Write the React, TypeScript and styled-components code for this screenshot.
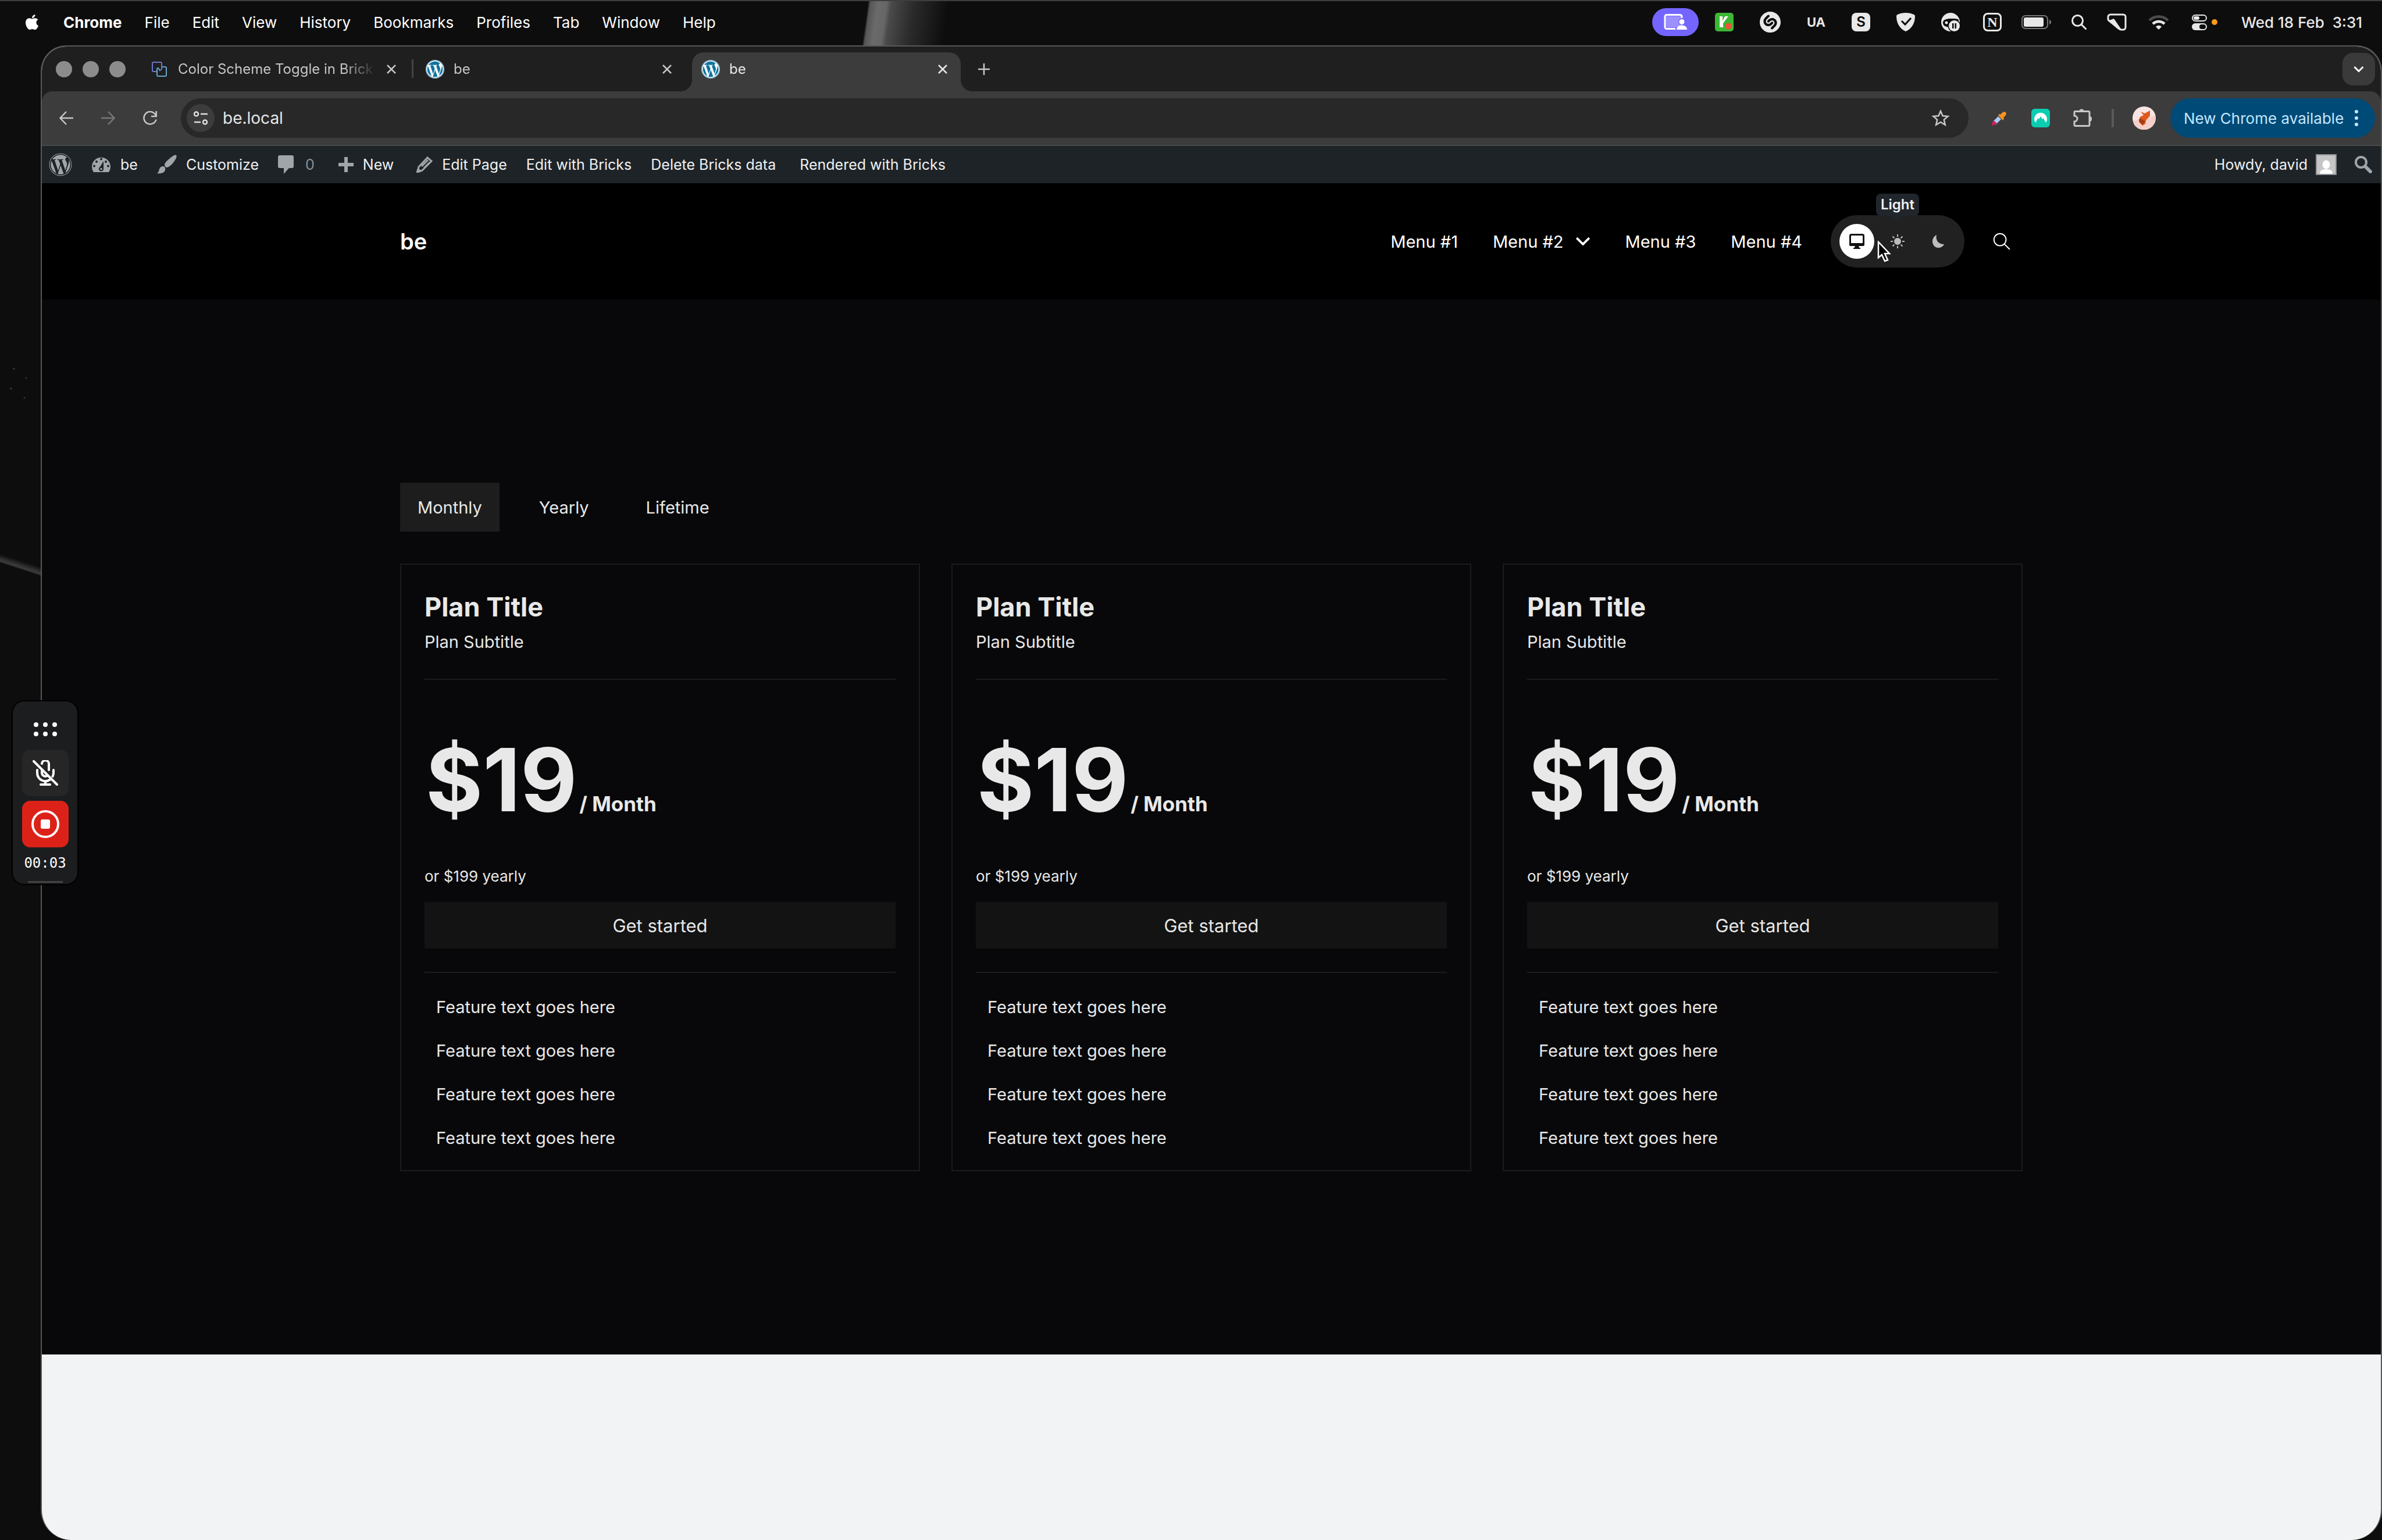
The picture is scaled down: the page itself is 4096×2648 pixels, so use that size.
import React from "react";
import styled, { createGlobalStyle, css } from "styled-components";
import { FaApple, FaWordpress } from "react-icons/fa";
import { SiShazam } from "react-icons/si";

const ui = `Inter, "Liberation Sans", sans-serif`;

const GlobalStyle = createGlobalStyle`
  * { box-sizing: border-box; }
  html, body { margin: 0; background: #0c0c0c; }
  body { font-family: ${ui}; color: #fff; }
  button { font: inherit; color: inherit; background: none; border: 0; padding: 0; }
  a { color: inherit; text-decoration: none; }
  h2, p, ul { margin: 0; padding: 0; font-weight: 400; }
  ul { list-style: none; }
  svg { display: block; flex: none; }
`;

/* ---------- desktop ---------- */

const Desktop = styled.div`
  position: relative;
  min-height: 100vh;
  display: flex;
  flex-direction: column;
  background-color: #0d0d0d;
  background-image:
    linear-gradient(98deg, transparent 7%, #555 9%, #6a6a6a 16%, #666 24%, #4a4a4a 28%, #2b2b2b 48%, transparent 80%),
    linear-gradient(198deg, transparent 38%, #303030 46%, #3c3c3c 50%, transparent 53%),
    radial-gradient(circle at 24px 34px, #3c3c3c 1px, transparent 2px),
    radial-gradient(circle at 45px 50px, #333 1px, transparent 2px),
    radial-gradient(circle at 19px 68px, #3c3c3c 1px, transparent 2px),
    radial-gradient(circle at 42px 84px, #333 1px, transparent 2px);
  background-size: 180px 78px, 70px 80px, 70px 120px, 70px 120px, 70px 120px, 70px 120px;
  background-position: 1480px 0, 0 936px, 0 600px, 0 600px, 0 600px, 0 600px;
  background-repeat: no-repeat;
`;

const MenuBar = styled.header`
  height: 78px;
  display: flex;
  align-items: center;
  justify-content: space-between;
  padding: 0 34px 4px 40px;
  border-top: 2px solid #3c3f3f;
  font-size: 26px;
`;

const MenuList = styled.nav`
  display: flex;
  align-items: center;
  gap: 39px;
`;

const MenuItem = styled.button<{ $bold?: boolean }>`
  font-weight: ${(p) => (p.$bold ? 700 : 400)};
`;

const StatusArea = styled.div`
  display: flex;
  align-items: center;
  color: #e8e8e8;
`;

const StatusGroup = styled.div<{ $gap: number; $after: number }>`
  display: flex;
  align-items: center;
  gap: ${(p) => p.$gap}px;
  margin-right: ${(p) => p.$after}px;
`;

const SharePill = styled.button`
  width: 80px;
  height: 48px;
  border-radius: 24px;
  background: #7565ff;
  display: grid;
  place-items: center;
  margin-right: 28px;
`;

const Glyph = styled.span<{ $outline?: boolean }>`
  width: 32px;
  height: 32px;
  border-radius: 8px;
  display: grid;
  place-items: center;
  font-size: 24px;
  line-height: 24px;
  font-weight: 600;
  ${(p) =>
    p.$outline
      ? css`
          border: 3px solid #e8e8e8;
          font-family: "Liberation Serif", serif;
          font-weight: 700;
        `
      : css`
          background: #e8e8e8;
          color: #0c0c0c;
        `}
`;

const InputSource = styled.span`
  font-size: 22px;
  font-weight: 700;
`;

const Clock = styled.time`
  font-size: 26px;
  font-weight: 500;
  white-space: pre;
`;

/* ---------- browser window ---------- */

const Window = styled.main`
  flex: 1;
  margin-left: 70px;
  display: flex;
  flex-direction: column;
  border: 2px solid #585858;
  border-bottom: 0;
  border-radius: 44px 44px 52px 52px;
  overflow: hidden;
  background: #f2f3f5;
`;

const TabStrip = styled.div`
  height: 77px;
  display: flex;
  align-items: center;
  padding: 0 10px 0 24px;
  background: #1f1f1f;
`;

const Lights = styled.div`
  display: flex;
  gap: 18px;
  margin-right: 26px;
`;

const Light = styled.button`
  width: 28px;
  height: 28px;
  border-radius: 50%;
  background: #8c8c8c;
`;

const Tabs = styled.div`
  align-self: flex-end;
  display: flex;
  gap: 12px;
`;

const Tab = styled.div<{ $active?: boolean; $divided?: boolean }>`
  position: relative;
  width: 462px;
  height: 67px;
  padding: 0 19px 10px 16px;
  display: flex;
  align-items: center;
  gap: 16px;
  border-radius: 20px 20px 0 0;
  color: ${(p) => (p.$active ? "#e6e6e6" : "#c4c4c4")};
  background: ${(p) => (p.$active ? "#3c3c3c" : "transparent")};
  ${(p) =>
    p.$active &&
    css`
      &::before,
      &::after {
        content: "";
        position: absolute;
        bottom: 0;
        width: 20px;
        height: 20px;
      }
      &::before {
        right: 100%;
        background: radial-gradient(circle at 0 0, transparent 20px, #3c3c3c 20px);
      }
      &::after {
        left: 100%;
        background: radial-gradient(circle at 100% 0, transparent 20px, #3c3c3c 20px);
      }
    `}
  ${(p) =>
    p.$divided &&
    css`
      &::before {
        content: "";
        position: absolute;
        left: -8px;
        top: 12px;
        width: 3px;
        height: 32px;
        background: #444;
      }
    `}
`;

const TabTitle = styled.span`
  flex: 1;
  min-width: 0;
  white-space: nowrap;
  font-size: 24px;
  line-height: 32px;
  mask-image: linear-gradient(90deg, #000 84%, rgba(0, 0, 0, 0.15) 98%);
`;

const Favicon = styled.span<{ $disc?: boolean }>`
  width: 32px;
  height: 32px;
  border-radius: 50%;
  display: grid;
  place-items: center;
  background: ${(p) => (p.$disc ? "#fff" : "transparent")};
  color: #0f739c;
`;

const IconButton = styled.button<{ $size: number }>`
  width: ${(p) => p.$size}px;
  height: ${(p) => p.$size}px;
  display: grid;
  place-items: center;
  flex: none;
  &:disabled {
    color: #777;
  }
`;

const NewTab = styled(IconButton)`
  margin-left: 20px;
  color: #c8c8c8;
`;

const TabSearch = styled(IconButton)`
  margin-left: auto;
  border-radius: 18px;
  background: #3a3a3a;
`;

const ToolbarBack = styled.div`
  background: #1f1f1f;
`;

const Toolbar = styled.div`
  height: 94px;
  display: flex;
  align-items: center;
  padding: 0 10px 0 17px;
  background: #3c3c3c;
  border-bottom: 2px solid #484b4b;
  border-radius: 18px 18px 0 0;
`;

const NavButtons = styled.div`
  display: flex;
  gap: 22px;
  margin-right: 28px;
  color: #c8c8c8;
`;

const Omnibox = styled.div`
  flex: 1;
  height: 68px;
  display: flex;
  align-items: center;
  padding: 0 32px 0 10px;
  border-radius: 34px;
  background: #282828;
`;

const SiteInfo = styled(IconButton)`
  border-radius: 50%;
  background: #3c3c3c;
`;

const Address = styled.input`
  flex: 1;
  min-width: 0;
  margin-left: 14px;
  padding: 0;
  border: 0;
  outline: 0;
  background: none;
  color: #e6e6e6;
  font: 400 28px/40px ${ui};
`;

const Extensions = styled.div`
  display: flex;
  align-items: center;
  gap: 40px;
  margin: 0 34px 0 36px;
`;

const Rule = styled.span`
  width: 4px;
  height: 32px;
  border-radius: 2px;
  background: #5a5a5a;
  margin-right: 32px;
`;

const UpdateButton = styled.button`
  height: 68px;
  width: 352px;
  margin-left: 25px;
  padding: 0 28px 0 23px;
  display: flex;
  align-items: center;
  justify-content: space-between;
  border-radius: 34px;
  background: #004a77;
  color: #c2e7ff;
  font-size: 26px;
`;

/* ---------- WordPress admin bar ---------- */

const AdminBar = styled.nav`
  height: 64px;
  display: flex;
  align-items: center;
  padding: 0 12px;
  background: #1d2327;
  color: #f0f0f1;
  font-size: 25px;
`;

const AdminList = styled.div`
  display: flex;
  align-items: center;
  gap: 33px;
`;

const AdminLink = styled.a<{ $muted?: boolean }>`
  display: flex;
  align-items: center;
  gap: ${(p) => (p.$muted ? 20 : 16)}px;
  padding-right: ${(p) => (p.$muted ? 8 : 0)}px;
  color: ${(p) => (p.$muted ? "#8c8f94" : "#f0f0f1")};
  svg {
    color: #a0a5aa;
  }
`;

const AdminTexts = styled.div`
  display: flex;
  align-items: center;
  gap: 33px;
  margin-left: 6px;
  > :last-child {
    margin-left: 8px;
  }
`;

const AdminRight = styled.div`
  display: flex;
  align-items: center;
  gap: 14px;
  margin-left: auto;
`;

const AdminAvatar = styled.span`
  width: 36px;
  height: 36px;
  margin-right: 14px;
  border: 2px solid #8c8f94;
  background: #c5c5c5;
`;

/* ---------- site ---------- */

const SiteHeader = styled.header`
  height: 200px;
  background: #000;
`;

const Container = styled.div`
  width: 100%;
  max-width: 2790px;
  margin: 0 auto;
`;

const HeaderRow = styled(Container)`
  height: 100%;
  display: flex;
  align-items: center;
  justify-content: space-between;
`;

const Brand = styled.a`
  font-size: 38px;
  font-weight: 600;
`;

const SiteNav = styled.nav`
  display: flex;
  align-items: center;
  font-size: 29px;
`;

const NavLinks = styled.div`
  display: flex;
  gap: 60px;
  margin-right: 49px;
`;

const NavLink = styled.a`
  display: flex;
  align-items: center;
  gap: 20px;
`;

const SchemeToggle = styled.div`
  position: relative;
  display: flex;
  gap: 10px;
  padding: 15px;
  margin-right: 28px;
  border-radius: 45px;
  background: #212121;
`;

const SchemeButton = styled.button<{ $on?: boolean }>`
  position: relative;
  width: 60px;
  height: 60px;
  border-radius: 50%;
  display: grid;
  place-items: center;
  background: ${(p) => (p.$on ? "#fff" : "transparent")};
  color: ${(p) => (p.$on ? "#111" : "#bdbdbd")};
`;

const Tooltip = styled.span`
  position: absolute;
  left: 50%;
  bottom: calc(100% + 14px);
  transform: translateX(-50%);
  padding: 0 8px;
  border-radius: 8px;
  background: #21262d;
  color: #f0f0f1;
  font-size: 24px;
  line-height: 38px;
  font-weight: 600;
  &::after {
    content: "";
    position: absolute;
    left: 50%;
    top: 100%;
    margin-left: -9px;
    border: 9px solid transparent;
    border-top-color: #21262d;
    border-bottom: 0;
  }
`;

const Pointer = styled.svg`
  position: absolute;
  left: 80px;
  top: 44px;
`;

const Pricing = styled.section`
  padding: 315px 0;
  background: #08080a;
  color: #e8e8e8;
`;

const PeriodTabs = styled.div`
  display: flex;
  gap: 38px;
  margin-bottom: 55px;
`;

const PeriodTab = styled.button<{ $on?: boolean }>`
  height: 84px;
  padding: 0 30px;
  font-size: 29px;
  background: ${(p) => (p.$on ? "#1d1d1d" : "transparent")};
`;

const Plans = styled.div`
  display: grid;
  grid-template-columns: repeat(3, 1fr);
  gap: 54px;
`;

const Card = styled.article`
  padding: 40px 40px 33px;
  border: 2px solid #1b1b1c;
`;

const CardHead = styled.div`
  padding-bottom: 36px;
  border-bottom: 2px solid #1b1b1c;
`;

const PlanTitle = styled.h2`
  font-size: 45px;
  line-height: 66px;
  font-weight: 700;
`;

const PlanSubtitle = styled.p`
  font-size: 29px;
  line-height: 54px;
`;

const Price = styled.div`
  display: flex;
  align-items: baseline;
  gap: 4px;
  margin-top: 92px;
  padding-left: 2px;
  font-weight: 700;
`;

const Amount = styled.span`
  font-size: 150px;
  line-height: 160px;
`;

const Period = styled.span`
  font-size: 35px;
  line-height: 44px;
`;

const Yearly = styled.p`
  margin-top: 66px;
  font-size: 26px;
  line-height: 40px;
`;

const Cta = styled.button`
  display: block;
  width: 100%;
  height: 80px;
  margin: 24px 0 40px;
  background: #131313;
  font-size: 31px;
`;

const Features = styled.ul`
  display: grid;
  gap: 31px;
  padding: 37px 20px 0;
  border-top: 2px solid #1b1b1c;
  font-size: 29px;
  line-height: 44px;
`;

/* ---------- recorder ---------- */

const Recorder = styled.aside`
  position: absolute;
  left: 20px;
  top: 1204px;
  width: 115px;
  height: 318px;
  padding: 36px 0 2px;
  display: flex;
  flex-direction: column;
  align-items: center;
  border: 2px solid #000;
  border-radius: 22px;
  background: #1c1d1f;
`;

const Tile = styled.button<{ $red?: boolean }>`
  width: 80px;
  height: 80px;
  margin-bottom: 8px;
  display: grid;
  place-items: center;
  border-radius: 14px;
  background: ${(p) => (p.$red ? "#dc2218" : "#262626")};
`;

const Timer = styled.time`
  margin-top: 4px;
  font: 400 24px/30px "DejaVu Sans Mono", monospace;
`;

const Grip = styled.span`
  width: 60px;
  height: 3px;
  margin-top: auto;
  background: #444;
`;

/* ---------- icons ---------- */

const ShareIcon = () => (
  <svg width="40" height="28" viewBox="0 0 40 28" fill="none">
    <rect x="4" y="4" width="26" height="19" fill="#9c90ff" />
    <path d="M31 7V4.500a3 3 0 0 0-3-3H5a3 3 0 0 0-3 3v18a3 3 0 0 0 3 3h15" stroke="#fff" strokeWidth="3" />
    <circle cx="31" cy="13" r="6" fill="#7565ff" />
    <circle cx="31" cy="13.500" r="4.500" fill="#fff" />
    <path d="M22 27c0-5 4-7.500 9-7.500s9 2.500 9 7.500z" fill="#fff" />
  </svg>
);

const KeyIcon = () => (
  <svg width="32" height="32" viewBox="0 0 32 32" fill="none">
    <rect width="32" height="32" rx="5" fill="#3cb832" />
    <path d="M10.500 6v19" stroke="#fff" strokeWidth="5" />
    <path d="M17 6h6l-9 12v7h-2v-9z" fill="#fff" />
    <circle cx="23" cy="23" r="5.500" fill="#f0523c" />
  </svg>
);

const ShieldIcon = () => (
  <svg width="32" height="32" viewBox="0 0 32 32" fill="none">
    <path d="M16 0c5 0 10 1 14 3 1 .5 2 1 2 3C32 17 27 27 16 32 5 27 0 17 0 6c0-2 1-2.500 2-3C6 1 11 0 16 0z" fill="#e8e8e8" />
    <path d="M9 14l6 6 10-11" stroke="#0c0c0c" strokeWidth="3" />
  </svg>
);

const MaskIcon = () => (
  <svg width="32" height="32" viewBox="0 0 32 32">
    <circle cx="16" cy="16" r="16" fill="#e8e8e8" />
    <path d="M3 17c0-5 6-7 13-7 6 0 12 0 14 2v5l-9-1-6 8c-6 1-12-1-12-7z" fill="#0c0c0c" />
    <circle cx="9" cy="17" r="2.500" fill="#e8e8e8" />
    <circle cx="22.500" cy="22.500" r="11" fill="#0c0c0c" />
    <circle cx="22.500" cy="22.500" r="9.500" fill="#e8e8e8" />
    <path d="M19 18h2.500v9H19zM23.500 18H26v9h-2.500z" fill="#0c0c0c" />
  </svg>
);

const BatteryIcon = () => (
  <svg width="52" height="26" viewBox="0 0 52 26" fill="none">
    <rect x="1" y="2" width="44" height="22" rx="6" stroke="#777" strokeWidth="2" />
    <rect x="4" y="5" width="34" height="16" rx="3" fill="#e8e8e8" />
    <path d="M48 9c2 .5 3 2 3 4s-1 3.500-3 4z" fill="#777" />
  </svg>
);

const SearchIcon = ({ size = 26, stroke = 3 }: { size?: number; stroke?: number }) => (
  <svg width={size} height={size} viewBox="0 0 26 26" fill="none" stroke="currentColor" strokeWidth={stroke} strokeLinecap="round">
    <circle cx="10.500" cy="10.500" r="9" />
    <path d="M17 17l7.500 7.500" />
  </svg>
);

const TagIcon = () => (
  <svg width="36" height="30" viewBox="0 0 36 30" fill="none">
    <path d="M3 11V6a4 4 0 0 1 4-4h22a4 4 0 0 1 4 4v18a4 4 0 0 1-4 4h-4c-2 0-3-1-4-2L4 12z" stroke="#e8e8e8" strokeWidth="3" strokeLinejoin="round" />
    <path d="M5 12l8-3 13 19h-4z" fill="#e8e8e8" />
  </svg>
);

const WifiIcon = () => (
  <svg width="40" height="28" viewBox="0 0 40 28" fill="none" strokeWidth="4.500">
    <path d="M4 11a23 23 0 0 1 32 0" stroke="#4c4c4c" />
    <path d="M10 17a14.500 14.500 0 0 1 20 0" stroke="#e8e8e8" />
    <path d="M15 22c3-3 7-3 10 0l-5 5z" fill="#e8e8e8" />
  </svg>
);

const ControlIcon = () => (
  <svg width="50" height="28" viewBox="0 0 50 28" fill="none">
    <rect x="4" y="2" width="24" height="10" rx="5" stroke="#e8e8e8" strokeWidth="2" />
    <rect x="6" y="4" width="10" height="6" rx="3" fill="#e8e8e8" />
    <rect x="3" y="16" width="26" height="12" rx="6" fill="#e8e8e8" />
    <rect x="16" y="18" width="11" height="8" rx="4" fill="#0c0c0c" />
    <circle cx="42" cy="14" r="5" fill="#ff9a1f" />
  </svg>
);

const CopyIcon = () => (
  <svg width="26" height="26" viewBox="0 0 26 26" fill="none" strokeWidth="2">
    <path d="M8 17H3a2 2 0 0 1-2-2V3a2 2 0 0 1 2-2h12a2 2 0 0 1 2 2v10l-4 3" stroke="#6f76cc" />
    <path d="M18 9h5a2 2 0 0 1 2 2v12a2 2 0 0 1-2 2H11a2 2 0 0 1-2-2V13a2 2 0 0 1 2-2l3 4" stroke="#62a9cf" />
  </svg>
);

const Stroke = ({ d, size = 24, width = 2.5 }: { d: string; size?: number; width?: number }) => (
  <svg width={size} height={size} viewBox="0 0 24 24" fill="none" stroke="currentColor" strokeWidth={width}>
    <path d={d} />
  </svg>
);

const CROSS = "M5 5l14 14M19 5L5 19";

const TuneIcon = () => (
  <svg width="24" height="24" viewBox="0 0 24 24" fill="none" stroke="#e0e0e0" strokeWidth="2.500">
    <circle cx="4.500" cy="5" r="3.500" />
    <path d="M12 5h12M1 19h11" />
    <circle cx="19.500" cy="19" r="3.500" />
  </svg>
);

const StarIcon = () => (
  <svg width="32" height="32" viewBox="0 0 32 32" fill="none" stroke="#c8c8c8" strokeWidth="2.500">
    <path d="M16 4l3.600 8.200 9 .8-6.800 5.900 2 8.800L16 23l-7.800 4.700 2-8.800L3.400 13l9-.8z" />
  </svg>
);

const DropperIcon = () => (
  <svg width="32" height="32" viewBox="0 0 32 32">
    <path d="M15 13l5 5-9 9-5-5z" fill="#a9cdf5" />
    <path d="M7 20l6 5c-2 2-5 3-9 4 0-3 1-6 3-9z" fill="#d81b60" />
    <path d="M15 11l2-2 2 1c3-4 6-6 9-4 2 3 0 6-4 9l1 2-2 3z" fill="#f7931e" />
  </svg>
);

const VpnIcon = () => (
  <svg width="32" height="32" viewBox="0 0 32 32">
    <rect width="32" height="32" rx="6" fill="#0ccdb2" />
    <path d="M7 24a11 11 0 1 1 18 0l-4.500-8-1.500 2-3-5-3 5-1.500-2z" fill="#fff" />
  </svg>
);

const PuzzleIcon = () => (
  <svg width="32" height="32" viewBox="0 0 32 32" fill="none">
    <path d="M2 12V6a1.500 1.500 0 0 1 1.500-1.500h23A1.500 1.500 0 0 1 28 6v22a1.500 1.500 0 0 1-1.500 1.500h-23A1.500 1.500 0 0 1 2 28v-6a5 5 0 0 0 0-10z" stroke="#c8c8c8" strokeWidth="3" />
    <path d="M10 5a4.500 4.500 0 0 1 9 0zM28 13a4.500 4.500 0 0 1 0 9z" fill="#c8c8c8" />
  </svg>
);

const ProfileIcon = () => (
  <svg width="40" height="40" viewBox="0 0 40 40">
    <circle cx="20" cy="20" r="20" fill="#f9e4e4" />
    <path d="M2 24l16-4 21-4a20 20 0 0 1-37 14z" fill="#f5cfc9" />
    <path d="M14 9l7 3 9-5v9l-7 8-1 6-5 3-6-7 2-8 6-3z" fill="#dd5a1d" />
    <path d="M12 20l10 5-5 7-6-6z" fill="#a83c12" />
  </svg>
);

const KebabIcon = () => (
  <svg width="8" height="28" viewBox="0 0 8 28" fill="currentColor">
    <circle cx="4" cy="3" r="3" />
    <circle cx="4" cy="14" r="3" />
    <circle cx="4" cy="25" r="3" />
  </svg>
);

const GaugeIcon = () => (
  <svg width="34" height="28" viewBox="0 0 34 28">
    <path d="M4 27a16 16 0 1 1 26 0z" fill="currentColor" />
    <g fill="#1d2327">
      <circle cx="17" cy="4.500" r="2" />
      <circle cx="9" cy="9" r="2" />
      <circle cx="25" cy="9" r="2" />
      <circle cx="5" cy="16.500" r="2" />
      <circle cx="29" cy="16.500" r="2" />
      <path d="M21 8l0 13a4 4 0 1 1-6-3z" />
    </g>
    <circle cx="17" cy="21.500" r="1.800" fill="currentColor" />
  </svg>
);

const BrushIcon = () => (
  <svg width="34" height="34" viewBox="0 0 34 34" fill="currentColor">
    <path d="M33 1c2 2-1 8-7 15-3 3-7 6-9 6-2 0-4-3-4-4 0-3 3-7 7-10 6-5 11-9 13-7z" />
    <path d="M11 20c2 0 4 3 3 6-1 5-6 7-14 6 3-2 3-4 4-7 1-4 4-5 7-5z" />
  </svg>
);

const CommentIcon = () => (
  <svg width="27" height="32" viewBox="0 0 27 32" fill="currentColor">
    <path d="M3 0h21a3 3 0 0 1 3 3v16a3 3 0 0 1-3 3h-5l-9 10V22H3a3 3 0 0 1-3-3V3a3 3 0 0 1 3-3z" />
  </svg>
);

const PlusIcon = () => (
  <svg width="26" height="26" viewBox="0 0 26 26" fill="currentColor">
    <path d="M10 0h6v10h10v6H16v10h-6V16H0v-6h10z" />
  </svg>
);

const PencilIcon = () => (
  <svg width="28" height="28" viewBox="0 0 28 28" fill="none" stroke="currentColor" strokeWidth="3">
    <path d="M19 2l7 6-16 16-8 3 2-9zM9 17L20 6M13 20L23 10" />
    <path d="M1 27l2-5 4 3z" fill="currentColor" />
  </svg>
);

const DashSearch = () => (
  <svg width="30" height="30" viewBox="0 0 30 30" fill="none" stroke="#a0a5aa">
    <circle cx="11" cy="11" r="9" strokeWidth="4" />
    <path d="M18 18l9 9" strokeWidth="6" strokeLinecap="round" />
  </svg>
);

const PersonIcon = () => (
  <svg width="32" height="32" viewBox="0 0 32 32" fill="#fff">
    <ellipse cx="16" cy="16" rx="6.500" ry="7.500" />
    <path d="M5 32c0-6 4-8 11-8s11 2 11 8z" />
  </svg>
);

const MonitorIcon = () => (
  <svg width="26" height="26" viewBox="0 0 26 26">
    <rect x="1.500" y="1.500" width="23" height="17" rx="2" fill="none" stroke="currentColor" strokeWidth="3" />
    <path d="M0 16h26v3a2 2 0 0 1-2 2H2a2 2 0 0 1-2-2zM10 20h6l1 4h2v2H7v-2h2z" fill="currentColor" />
  </svg>
);

const SunIcon = () => (
  <svg width="24" height="24" viewBox="0 0 24 24" fill="currentColor" stroke="currentColor" strokeWidth="2">
    <circle cx="12" cy="12" r="5" />
    <path d="M12 0v4M12 20v4M0 12h4M20 12h4M3.500 3.500l3 3M17.500 17.500l3 3M3.500 20.500l3-3M17.500 6.500l3-3" />
  </svg>
);

const MoonIcon = () => (
  <svg width="24" height="24" viewBox="0 0 24 24" fill="currentColor">
    <path d="M9 1C7 10 12 17 22 17c-2 4-6 6-10 6C6 23 2 18 2 12 2 7 5 3 9 1z" />
  </svg>
);

const MicOffIcon = () => (
  <svg width="44" height="44" viewBox="0 0 44 44" fill="none" stroke="#fff" strokeWidth="4" strokeLinecap="round">
    <path d="M2 2l40 40M16 6a6 6 0 0 1 12 1v10M16 17v5a6 6 0 0 0 9 5M8 17v5a14 14 0 0 0 22 11.500M36 17v5c0 2-.5 4-1.500 6M22 36v6M14 42h16" />
  </svg>
);

const StopIcon = () => (
  <svg width="48" height="48" viewBox="0 0 48 48" fill="none">
    <circle cx="24" cy="24" r="22" stroke="#fff" strokeWidth="4" />
    <rect x="16" y="16" width="16" height="16" rx="3" fill="#fff" />
  </svg>
);

const DotsIcon = () => (
  <svg width="40" height="24" viewBox="0 0 40 24" fill="#fff">
    {[4, 20].map((y) => [4, 20, 36].map((x) => <circle key={`${x}-${y}`} cx={x} cy={y} r="4" />))}
  </svg>
);

const DotsHandle = styled.div`
  height: 47px;
`;

/* ---------- page ---------- */

const menuItems = ["File", "Edit", "View", "History", "Bookmarks", "Profiles", "Tab", "Window", "Help"];
const plans = [1, 2, 3];
const features = [1, 2, 3, 4];

export default function App() {
  return (
    <Desktop>
      <GlobalStyle />
      <MenuBar>
        <MenuList aria-label="Menu bar">
          <FaApple size={30} />
          <MenuItem $bold>Chrome</MenuItem>
          {menuItems.map((item) => (
            <MenuItem key={item}>{item}</MenuItem>
          ))}
        </MenuList>
        <StatusArea>
          <SharePill aria-label="Screen sharing">
            <ShareIcon />
          </SharePill>
          <StatusGroup $gap={45} $after={40}>
            <KeyIcon />
            <SiShazam size={36} />
            <InputSource>UA</InputSource>
            <Glyph>S</Glyph>
            <ShieldIcon />
            <MaskIcon />
          </StatusGroup>
          <StatusGroup $gap={34} $after={38}>
            <Glyph $outline>N</Glyph>
            <BatteryIcon />
            <SearchIcon />
            <TagIcon />
            <WifiIcon />
            <ControlIcon />
          </StatusGroup>
          <Clock>{"Wed 18 Feb  3:31"}</Clock>
        </StatusArea>
      </MenuBar>

      <Window>
        <TabStrip>
          <Lights>
            <Light aria-label="Close window" />
            <Light aria-label="Minimise window" />
            <Light aria-label="Zoom window" />
          </Lights>
          <Tabs>
            <Tab>
              <Favicon>
                <CopyIcon />
              </Favicon>
              <TabTitle>Color Scheme Toggle in Brick</TabTitle>
              <IconButton $size={24} aria-label="Close tab">
                <Stroke d={CROSS} />
              </IconButton>
            </Tab>
            <Tab $divided>
              <Favicon $disc>
                <FaWordpress size={32} />
              </Favicon>
              <TabTitle>be</TabTitle>
              <IconButton $size={24} aria-label="Close tab">
                <Stroke d={CROSS} />
              </IconButton>
            </Tab>
            <Tab $active>
              <Favicon $disc>
                <FaWordpress size={32} />
              </Favicon>
              <TabTitle>be</TabTitle>
              <IconButton $size={24} aria-label="Close tab">
                <Stroke d={CROSS} />
              </IconButton>
            </Tab>
          </Tabs>
          <NewTab $size={40} aria-label="New tab">
            <Stroke d="M12 2v20M2 12h20" />
          </NewTab>
          <TabSearch $size={56} aria-label="Search tabs">
            <Stroke d="M4.500 8l7.500 7.500L19.500 8" width={3} />
          </TabSearch>
        </TabStrip>

        <ToolbarBack>
          <Toolbar>
            <NavButtons>
              <IconButton $size={50} aria-label="Back">
                <Stroke d="M24 12H2M12 1L1.500 12 12 23" />
              </IconButton>
              <IconButton $size={50} aria-label="Forward" disabled>
                <Stroke d="M0 12h22M12 1l10.500 11L12 23" />
              </IconButton>
              <IconButton $size={50} aria-label="Reload">
                <Stroke d="M22.500 14.500A10.700 10.700 0 1 1 20 4.500l3 4M22.700 0v9H14" />
              </IconButton>
            </NavButtons>
            <Omnibox>
              <SiteInfo $size={48} aria-label="Site information">
                <TuneIcon />
              </SiteInfo>
              <Address aria-label="Address" defaultValue="be.local" />
              <IconButton $size={32} aria-label="Bookmark this page">
                <StarIcon />
              </IconButton>
            </Omnibox>
            <Extensions>
              <IconButton $size={32} aria-label="Color picker">
                <DropperIcon />
              </IconButton>
              <IconButton $size={32} aria-label="VPN">
                <VpnIcon />
              </IconButton>
              <IconButton $size={32} aria-label="Extensions">
                <PuzzleIcon />
              </IconButton>
            </Extensions>
            <Rule />
            <IconButton $size={40} aria-label="Profile">
              <ProfileIcon />
            </IconButton>
            <UpdateButton>
              New Chrome available
              <KebabIcon />
            </UpdateButton>
          </Toolbar>
        </ToolbarBack>

        <AdminBar aria-label="Admin">
          <AdminList>
            <AdminLink href="#" aria-label="About WordPress">
              <FaWordpress size={40} />
            </AdminLink>
            <AdminLink href="#">
              <GaugeIcon />
              be
            </AdminLink>
            <AdminLink href="#">
              <BrushIcon />
              Customize
            </AdminLink>
            <AdminLink href="#" $muted>
              <CommentIcon />0
            </AdminLink>
            <AdminLink href="#">
              <PlusIcon />
              New
            </AdminLink>
            <AdminTexts>
              <AdminLink href="#">
                <PencilIcon />
                Edit Page
              </AdminLink>
              <AdminLink href="#">Edit with Bricks</AdminLink>
              <AdminLink href="#">Delete Bricks data</AdminLink>
              <AdminLink href="#">Rendered with Bricks</AdminLink>
            </AdminTexts>
          </AdminList>
          <AdminRight>
            <AdminLink href="#">Howdy, david</AdminLink>
            <AdminAvatar>
              <PersonIcon />
            </AdminAvatar>
            <IconButton $size={36} aria-label="Search">
              <DashSearch />
            </IconButton>
          </AdminRight>
        </AdminBar>

        <SiteHeader>
          <HeaderRow>
            <Brand href="#">be</Brand>
            <SiteNav>
              <NavLinks>
                <NavLink href="#">Menu #1</NavLink>
                <NavLink href="#">
                  Menu #2
                  <Stroke d="M2 6.500l10 10 10-10" size={26} width={3.5} />
                </NavLink>
                <NavLink href="#">Menu #3</NavLink>
                <NavLink href="#">Menu #4</NavLink>
              </NavLinks>
              <SchemeToggle>
                <SchemeButton $on aria-label="System">
                  <MonitorIcon />
                </SchemeButton>
                <SchemeButton aria-label="Light">
                  <SunIcon />
                  <Tooltip>Light</Tooltip>
                </SchemeButton>
                <SchemeButton aria-label="Dark">
                  <MoonIcon />
                </SchemeButton>
                <Pointer width="24" height="38" viewBox="0 0 24 38">
                  <path d="M2 2v27l6-5 5 11 5-2-5-11h8z" fill="#000" stroke="#fff" strokeWidth="2.500" />
                </Pointer>
              </SchemeToggle>
              <IconButton $size={72} aria-label="Search site">
                <SearchIcon size={30} stroke={1.7} />
              </IconButton>
            </SiteNav>
          </HeaderRow>
        </SiteHeader>

        <Pricing>
          <Container>
            <PeriodTabs role="tablist">
              <PeriodTab role="tab" aria-selected $on>
                Monthly
              </PeriodTab>
              <PeriodTab role="tab">Yearly</PeriodTab>
              <PeriodTab role="tab">Lifetime</PeriodTab>
            </PeriodTabs>
            <Plans>
              {plans.map((plan) => (
                <Card key={plan}>
                  <CardHead>
                    <PlanTitle>Plan Title</PlanTitle>
                    <PlanSubtitle>Plan Subtitle</PlanSubtitle>
                  </CardHead>
                  <Price>
                    <Amount>$19</Amount>
                    <Period>/ Month</Period>
                  </Price>
                  <Yearly>or $199 yearly</Yearly>
                  <Cta>Get started</Cta>
                  <Features>
                    {features.map((feature) => (
                      <li key={feature}>Feature text goes here</li>
                    ))}
                  </Features>
                </Card>
              ))}
            </Plans>
          </Container>
        </Pricing>
      </Window>

      <Recorder aria-label="Screen recorder">
        <DotsHandle>
          <DotsIcon />
        </DotsHandle>
        <Tile aria-label="Unmute microphone">
          <MicOffIcon />
        </Tile>
        <Tile $red aria-label="Stop recording">
          <StopIcon />
        </Tile>
        <Timer>00:03</Timer>
        <Grip />
      </Recorder>
    </Desktop>
  );
}
